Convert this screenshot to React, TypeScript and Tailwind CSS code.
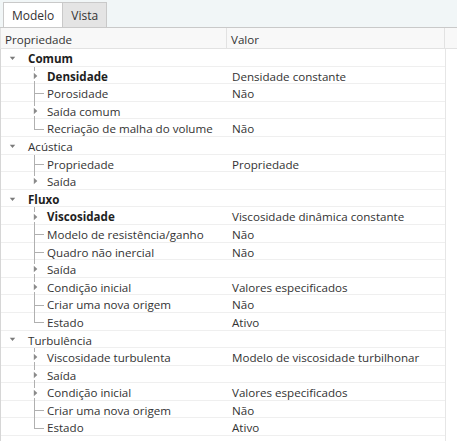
import React from 'react';

type Item = {
  label: string;
  value?: string;
  bold?: boolean;
  expandable?: boolean;
};

type Group = {
  label: string;
  bold?: boolean;
  items: Item[];
};

const groups: Group[] = [
  {
    label: 'Comum',
    bold: true,
    items: [
      { label: 'Densidade', value: 'Densidade constante', bold: true, expandable: true },
      { label: 'Porosidade', value: 'Não' },
      { label: 'Saída comum', expandable: true },
      { label: 'Recriação de malha do volume', value: 'Não' },
    ],
  },
  {
    label: 'Acústica',
    items: [
      { label: 'Propriedade', value: 'Propriedade' },
      { label: 'Saída', expandable: true },
    ],
  },
  {
    label: 'Fluxo',
    bold: true,
    items: [
      { label: 'Viscosidade', value: 'Viscosidade dinâmica constante', bold: true, expandable: true },
      { label: 'Modelo de resistência/ganho', value: 'Não' },
      { label: 'Quadro não inercial', value: 'Não' },
      { label: 'Saída', expandable: true },
      { label: 'Condição inicial', value: 'Valores especificados', expandable: true },
      { label: 'Criar uma nova origem', value: 'Não' },
      { label: 'Estado', value: 'Ativo' },
    ],
  },
  {
    label: 'Turbulência',
    items: [
      { label: 'Viscosidade turbulenta', value: 'Modelo de viscosidade turbilhonar', expandable: true },
      { label: 'Saída', expandable: true },
      { label: 'Condição inicial', value: 'Valores especificados', expandable: true },
      { label: 'Criar uma nova origem', value: 'Não' },
      { label: 'Estado', value: 'Ativo' },
    ],
  },
];

const DownArrow = () => (
  <svg width="7" height="5" viewBox="0 0 7 5" className="block">
    <path d="M0.8 0.8 L6.2 0.8 L3.5 4 Z" fill="#7a7a7a" />
  </svg>
);

const RightArrow = () => (
  <svg width="5" height="8" viewBox="0 0 5 8" className="block">
    <path d="M0.8 0.8 L4.3 4 L0.8 7.2 Z" fill="#8a8a8a" />
  </svg>
);

const GroupRow = ({ group }: { group: Group }) => (
  <div className="flex h-[17.6px] items-center border-b border-[#efefef]">
    <div className="flex w-[226px] items-center">
      <div className="ml-[8px] mt-[2px] w-[19px]">
        <DownArrow />
      </div>
      <span className={`pt-[3px] ${group.bold ? 'font-bold text-[#1e1e1e]' : 'text-[#333]'}`}>{group.label}</span>
    </div>
  </div>
);

const ChildRow = ({ item, last }: { item: Item; last: boolean }) => (
  <div className="flex h-[17.6px] items-stretch border-b border-[#efefef]">
    <div className="flex w-[226px] items-stretch">
      <div className="relative w-[46px] shrink-0">
        <div
          className={`absolute left-[33px] top-0 w-px bg-[#b0b0b0] ${last ? 'h-[calc(50%+1px)]' : 'h-[calc(100%+1px)]'}`}
        />
        {item.expandable ? (
          <div className="absolute left-[32px] top-[calc(50%+1px)] -translate-y-1/2 bg-white py-px">
            <RightArrow />
          </div>
        ) : (
          <div className="absolute left-[33px] top-[calc(50%+1px)] h-px w-[10px] bg-[#b0b0b0]" />
        )}
      </div>
      <span
        className={`flex items-center whitespace-nowrap pt-[3px] ${item.bold ? 'font-bold text-[#1e1e1e]' : 'text-[#333]'}`}
      >
        {item.label}
      </span>
    </div>
    <div className="flex items-center whitespace-nowrap pl-[5px] pt-[3px] text-[#333]">{item.value}</div>
  </div>
);

export default function App() {
  return (
    <div
      className="h-[441px] w-[457px] overflow-hidden bg-white text-[11.6px] leading-none"
      style={{ fontFamily: '"Open Sans", "Noto Sans", sans-serif' }}
    >
      {/* tab strip */}
      <div className="flex h-[28px] items-end border-b border-[#c9c9c9] bg-[#f1f6f7] pl-[3px] text-[12px]">
        <div className="flex h-[25px] items-center border border-b-0 border-[#c9c9c9] bg-white px-[8px] pt-[2px] text-[#333]">
          Modelo
        </div>
        <div className="flex h-[25px] items-center border border-b-0 border-l-0 border-[#c9c9c9] bg-[#e4e4e4] px-[8px] pt-[2px] text-[#333]">
          Vista
        </div>
      </div>

      {/* column header */}
      <div className="flex h-[21px] items-stretch border-b border-l border-[#e2e2e2] bg-[#f8f8f8] text-[#333]">
        <div className="flex w-[226px] items-center border-r border-[#e2e2e2] pl-[4px] pt-[3px]">Propriedade</div>
        <div className="flex w-[218px] items-center border-r border-[#e2e2e2] pl-[4px] pt-[3px]">Valor</div>
        <div className="flex-1" />
      </div>

      {/* body */}
      <div className="flex">
        <div className="w-[445px] border-l border-[#d6d6d6]">
          {groups.map((g) => (
            <div key={g.label}>
              <GroupRow group={g} />
              {g.items.map((it, i) => (
                <ChildRow key={g.label + it.label} item={it} last={i === g.items.length - 1} />
              ))}
            </div>
          ))}
        </div>
        <div className="h-[400px] flex-1 border-l border-[#e6e6e6]" />
      </div>
    </div>
  );
}
